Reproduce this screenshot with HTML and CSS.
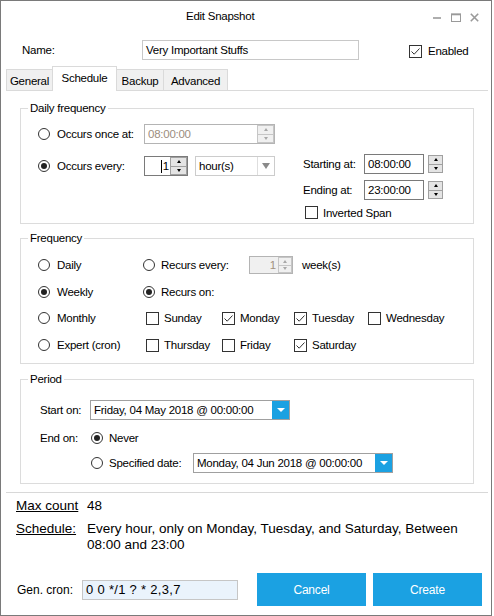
FILE: index.html
```html
<!DOCTYPE html>
<html>
<head>
<meta charset="utf-8">
<title>Edit Snapshot</title>
<link rel="stylesheet" href="styles.css">
</head>
<body>
<div class="window">
  <div class="titlebar">
    <span class="title">Edit Snapshot</span>
    <div class="wincontrols">
      <svg width="9" height="9" viewBox="0 0 9 9"><line x1="0" y1="5" x2="8" y2="5" stroke="#9a9a9a" stroke-width="1.6"/></svg>
      <svg width="10" height="9" viewBox="0 0 10 9"><rect x="0.5" y="1" width="9" height="7.5" fill="none" stroke="#9a9a9a" stroke-width="1"/><line x1="0" y1="1.5" x2="10" y2="1.5" stroke="#9a9a9a" stroke-width="1.6"/></svg>
      <svg width="9" height="9" viewBox="0 0 9 9"><path d="M0.8 0.8 L8.2 8.2 M8.2 0.8 L0.8 8.2" stroke="#9a9a9a" stroke-width="1.6"/></svg>
    </div>
  </div>

  <div class="namerow">
    <span class="namelabel">Name:</span>
    <div class="textbox nameinput">Very Important Stuffs</div>
    <div class="enabled">
      <span class="cb"><svg width="11" height="11" viewBox="0 0 11 11"><path d="M1.5 5.5 L4.2 8.2 L9.5 2.5" fill="none" stroke="#333" stroke-width="1"/></svg></span>
      <span>Enabled</span>
    </div>
  </div>

  <div class="tabs">
    <div class="tab t-general">General</div>
    <div class="tab t-schedule active">Schedule</div>
    <div class="tab t-backup">Backup</div>
    <div class="tab t-advanced">Advanced</div>
  </div>

  <div class="page">
    <fieldset class="group">
      <legend>Daily frequency</legend>
      <div class="body daily-body">
        <div class="row r1">
          <span class="radio"></span>
          <span class="rl">Occurs once at:</span>
          <div class="textbox disabled oncebox">
            <span class="val">08:00:00</span>
            <div class="spin inner dim"><span class="sb up"></span><span class="sb down"></span></div>
          </div>
        </div>
        <div class="row r2">
          <div class="left">
            <span class="radio on"></span>
            <span class="rl">Occurs every:</span>
            <div class="textbox dark numbox">
              <span class="caret"></span><span class="val">1</span>
              <div class="spin inner"><span class="sb up"></span><span class="sb down"></span></div>
            </div>
            <div class="select">
              <span class="seltext">hour(s)</span>
              <span class="selarrow"></span>
            </div>
          </div>
          <div class="right">
            <div class="tr">
              <span class="tl">Starting at:</span>
              <div class="textbox dark timebox">08:00:00</div>
              <div class="spin outer"><span class="sb up"></span><span class="sb down"></span></div>
            </div>
            <div class="tr tr2">
              <span class="tl">Ending at:</span>
              <div class="textbox dark timebox">23:00:00</div>
              <div class="spin outer"><span class="sb up"></span><span class="sb down"></span></div>
            </div>
            <div class="tr inv">
              <span class="cb"></span>
              <span class="cbtext">Inverted Span</span>
            </div>
          </div>
        </div>
      </div>
    </fieldset>

    <fieldset class="group g2">
      <legend>Frequency</legend>
      <div class="body freq-body">
        <div class="frow">
          <div class="c1"><span class="radio"></span><span class="fl">Daily</span></div>
          <span class="radio"></span>
          <span class="fl2">Recurs every:</span>
          <div class="textbox disabled weekbox">
            <span class="val">1</span>
            <div class="spin inner dim"><span class="sb up"></span><span class="sb down"></span></div>
          </div>
          <span class="weeks">week(s)</span>
        </div>
        <div class="frow f2">
          <div class="c1"><span class="radio on"></span><span class="fl">Weekly</span></div>
          <span class="radio on"></span>
          <span class="fl2">Recurs on:</span>
        </div>
        <div class="frow f3">
          <div class="c1b"><span class="radio"></span><span class="fl">Monthly</span></div>
          <div class="day d1"><span class="cb"></span><span class="dt">Sunday</span></div>
          <div class="day d2"><span class="cb"><svg width="11" height="11" viewBox="0 0 11 11"><path d="M1.5 5.5 L4.2 8.2 L9.5 2.5" fill="none" stroke="#333" stroke-width="1"/></svg></span><span class="dt">Monday</span></div>
          <div class="day d3"><span class="cb"><svg width="11" height="11" viewBox="0 0 11 11"><path d="M1.5 5.5 L4.2 8.2 L9.5 2.5" fill="none" stroke="#333" stroke-width="1"/></svg></span><span class="dt">Tuesday</span></div>
          <div class="day"><span class="cb"></span><span class="dt">Wednesday</span></div>
        </div>
        <div class="frow f4">
          <div class="c1b"><span class="radio"></span><span class="fl">Expert (cron)</span></div>
          <div class="day d1"><span class="cb"></span><span class="dt">Thursday</span></div>
          <div class="day d2"><span class="cb"></span><span class="dt">Friday</span></div>
          <div class="day d3"><span class="cb"><svg width="11" height="11" viewBox="0 0 11 11"><path d="M1.5 5.5 L4.2 8.2 L9.5 2.5" fill="none" stroke="#333" stroke-width="1"/></svg></span><span class="dt">Saturday</span></div>
        </div>
      </div>
    </fieldset>

    <fieldset class="group g3">
      <legend>Period</legend>
      <div class="body period-body">
        <div class="prow">
          <span class="pl">Start on:</span>
          <div class="datebox">
            <span class="dtext">Friday, 04 May 2018 @ 00:00:00</span>
            <span class="dbtn"></span>
          </div>
        </div>
        <div class="prow p2">
          <span class="pl pl2">End on:</span>
          <span class="radio on"></span>
          <span class="pr">Never</span>
        </div>
        <div class="prow p3">
          <span class="pl pl2"></span>
          <span class="radio"></span>
          <span class="pr prw">Specified date:</span>
          <div class="datebox">
            <span class="dtext">Monday, 04 Jun 2018 @ 00:00:00</span>
            <span class="dbtn"></span>
          </div>
        </div>
      </div>
    </fieldset>
  </div>

  <div class="summary">
    <div class="srow">
      <span class="slabel">Max count</span>
      <span class="sval">48</span>
    </div>
    <div class="srow s2">
      <span class="slabel">Schedule:</span>
      <span class="sval">Every hour, only on Monday, Tuesday, and Saturday, Between 08:00 and 23:00</span>
    </div>
  </div>

  <div class="footer">
    <span class="glabel">Gen. cron:</span>
    <div class="cronbox">0 0 */1 ? * 2,3,7</div>
    <div class="btn cancel">Cancel</div>
    <div class="btn create">Create</div>
  </div>
</div>
</body>
</html>
```

FILE: styles.css
```css
* { box-sizing: border-box; }
html, body { margin: 0; padding: 0; background: #fff; }
body {
  font-family: "Liberation Sans", Arial, sans-serif;
  font-size: 11.5px;
  letter-spacing: -0.25px;
  color: #000;
}
.window {
  width: 492px;
  height: 616px;
  border: 1px solid #7a7a7a;
  background: #fff;
  overflow: hidden;
}

/* title bar */
.titlebar { height: 30px; display: flex; align-items: center; }
.title { margin-left: 185px; }
.wincontrols {
  margin-left: auto;
  margin-right: 12px;
  margin-top: 2px;
  display: flex;
  align-items: center;
  gap: 9px;
}
.wincontrols svg { display: block; }

/* name row */
.namerow { display: flex; align-items: center; height: 20px; margin-top: 9px; }
.namelabel { margin-left: 21px; width: 120px; }
.textbox {
  height: 20px;
  border: 1px solid #c8c8c8;
  background: #fff;
  padding-left: 3px;
  display: flex;
  align-items: center;
  flex: none;
}
.textbox.dark { border-color: #7a7a7a; }
.textbox.disabled { border-color: #b4b4b4; color: #9c8d7e; }
.nameinput { width: 217px; }
.enabled { margin-left: 50px; display: flex; align-items: center; gap: 6px; margin-top: 2px; }

.cb {
  width: 13px;
  height: 13px;
  border: 1px solid #333;
  background: #fff;
  display: inline-flex;
  align-items: center;
  justify-content: center;
  flex: none;
}
.cb svg { display: block; }

.radio {
  width: 12px;
  height: 12px;
  border: 1px solid #333;
  border-radius: 50%;
  background: #fff;
  display: inline-flex;
  align-items: center;
  justify-content: center;
  flex: none;
}
.radio.on::after {
  content: "";
  width: 6px;
  height: 6px;
  border-radius: 50%;
  background: #222;
}

/* tabs */
.tabs {
  display: flex;
  align-items: flex-end;
  margin: 6px 0 0 5px;
  width: 482px;
  height: 25px;
  border-bottom: 1px solid #dadada;
}
.tab {
  height: 21px;
  border: 1px solid #dadada;
  border-bottom: none;
  background: #f0f0f0;
  margin-left: -1px;
  display: flex;
  align-items: center;
  justify-content: center;
  flex: none;
  padding-top: 1px;
}
.t-general { width: 47px; margin-left: 0; }
.t-schedule { width: 65px; }
.t-backup { width: 48px; }
.t-advanced { width: 65px; }
.tab.active {
  height: 25px;
  background: #fff;
  margin-bottom: -1px;
  position: relative;
  z-index: 1;
  padding-top: 0;
  padding-bottom: 2px;
}

/* tab page */
.page {
  margin-left: 5px;
  width: 482px;
  height: 402px;
  padding-top: 10px;
  border-bottom: 1px solid #d8d8d8;
}
fieldset.group {
  margin: 0 0 0 14px;
  width: 454px;
  border: 1px solid #dcdcdc;
  padding: 0;
  min-width: 0;
}
fieldset.group legend {
  margin-left: 7px;
  padding: 0 2px;
  line-height: 14px;
}
.g2 { margin-top: 7px !important; }
.g3 { margin-top: 8px !important; }

.row { display: flex; align-items: center; }

/* daily */
.daily-body { height: 108px; padding-top: 9px; }
.r1 { height: 20px; padding-left: 17px; }
.rl { margin-left: 7px; width: 87px; flex: none; }
.oncebox { width: 131px; }
.oncebox .val { flex: 1; }

.spin { display: flex; flex-direction: column; flex: none; }
.spin.inner { width: 17px; height: 18px; }
.spin.outer { width: 15px; height: 18px; margin-left: 4px; }
.sb {
  flex: 1;
  border: 1px solid #a0a0a0;
  background: #e4e4e4;
  display: flex;
  align-items: center;
  justify-content: center;
}
.sb.down { border-top: none; }
.sb.up::after {
  content: "";
  border-left: 2.5px solid transparent;
  border-right: 2.5px solid transparent;
  border-bottom: 3px solid #000;
}
.sb.down::after {
  content: "";
  border-left: 2.5px solid transparent;
  border-right: 2.5px solid transparent;
  border-top: 3px solid #000;
}
.spin.dim .sb { border-color: #c6c6c6; background: #f0f0f0; }
.spin.dim .sb.up::after { border-bottom-color: #a8a8a8; }
.spin.dim .sb.down::after { border-top-color: #a8a8a8; }

.r2 { margin-top: 10px; padding-left: 17px; align-items: flex-start; }
.left { display: flex; align-items: center; height: 20px; margin-top: 2px; }
.numbox { width: 44px; padding-left: 0; justify-content: flex-end; }
.numbox .caret { width: 1px; height: 13px; background: #000; margin-right: 1px; }
.numbox .val { margin-right: 1px; }
.select {
  margin-left: 7px;
  width: 80px;
  height: 20px;
  border: 1px solid #cccccc;
  display: flex;
  align-items: center;
  flex: none;
}
.seltext { flex: 1; padding-left: 3px; }
.selarrow {
  width: 17px;
  height: 18px;
  border-left: 1px solid #dedede;
  display: flex;
  align-items: center;
  justify-content: center;
}
.selarrow::after {
  content: "";
  border-left: 4px solid transparent;
  border-right: 4px solid transparent;
  border-top: 6px solid #8a8a8a;
}

.right { margin-left: 28px; display: flex; flex-direction: column; }
.tr { display: flex; align-items: center; height: 20px; }
.tr2 { margin-top: 6px; }
.tl { width: 61px; flex: none; }
.timebox { width: 60px; }
.inv { margin-top: 6px; padding-left: 2px; height: 13px; }
.cbtext { margin-left: 5px; }

/* frequency */
.freq-body { height: 118px; padding-top: 10px; }
.frow { display: flex; align-items: center; height: 20px; padding-left: 17px; }
.f2 { margin-top: 7px; }
.f3 { margin-top: 6px; }
.f4 { margin-top: 7px; }
.c1 { width: 105px; display: flex; align-items: center; flex: none; }
.c1b { width: 108px; display: flex; align-items: center; flex: none; }
.fl { margin-left: 7px; }
.fl2 { margin-left: 6px; width: 88px; flex: none; }
.weekbox {
  width: 44px;
  height: 18px;
  background: #f0f0f0;
  padding-left: 0;
  justify-content: flex-end;
}
.weekbox .val { margin-right: 2px; color: #a09080; }
.weekbox .spin.inner { height: 16px; width: 14px; }
.weeks { margin-left: 9px; }
.day { display: flex; align-items: center; flex: none; }
.d1 { width: 76px; }
.d2 { width: 72px; }
.d3 { width: 74px; }
.dt { margin-left: 5px; }

/* period */
.period-body { height: 97px; padding-top: 14px; }
.prow { display: flex; align-items: center; height: 20px; padding-left: 19px; }
.p2 { margin-top: 8px; }
.p3 { margin-top: 5px; }
.pl { width: 50px; flex: none; }
.pl2 { width: 51px; }
.pr { margin-left: 6px; }
.prw { width: 84px; flex: none; }
.datebox {
  width: 200px;
  height: 20px;
  border: 1px solid #a0a0a0;
  display: flex;
  align-items: center;
  flex: none;
}
.dtext { flex: 1; padding-left: 3px; white-space: nowrap; overflow: hidden; }
.dbtn {
  width: 17px;
  height: 18px;
  background: #1ba1e2;
  display: flex;
  align-items: center;
  justify-content: center;
  flex: none;
}
.dbtn::after {
  content: "";
  border-left: 4px solid transparent;
  border-right: 4px solid transparent;
  border-top: 4px solid #fff;
}

/* summary */
.summary { font-size: 13.5px; letter-spacing: 0; padding-left: 15px; margin-top: 5px; }
.srow { display: flex; line-height: 16px; }
.s2 { margin-top: 7px; }
.slabel { width: 71px; flex: none; text-decoration: underline; }
.sval { width: 388px; }

/* footer */
.footer {
  display: flex;
  align-items: center;
  height: 33px;
  margin-top: 20px;
  padding-left: 16px;
  font-size: 12px;
  letter-spacing: 0;
}
.glabel { width: 65px; flex: none; }
.cronbox {
  width: 156px;
  height: 20px;
  border: 1px solid #c6c6c6;
  background: #eaf3fc;
  padding-left: 3px;
  display: flex;
  align-items: center;
  font-size: 13px;
  letter-spacing: 0.3px;
  flex: none;
}
.btn {
  width: 109px;
  height: 33px;
  background: #1ba1e2;
  color: #fff;
  display: flex;
  align-items: center;
  justify-content: center;
  flex: none;
  font-size: 12px;
  letter-spacing: -0.2px;
}
.cancel { margin-left: 19px; }
.create { margin-left: 7px; }
```
